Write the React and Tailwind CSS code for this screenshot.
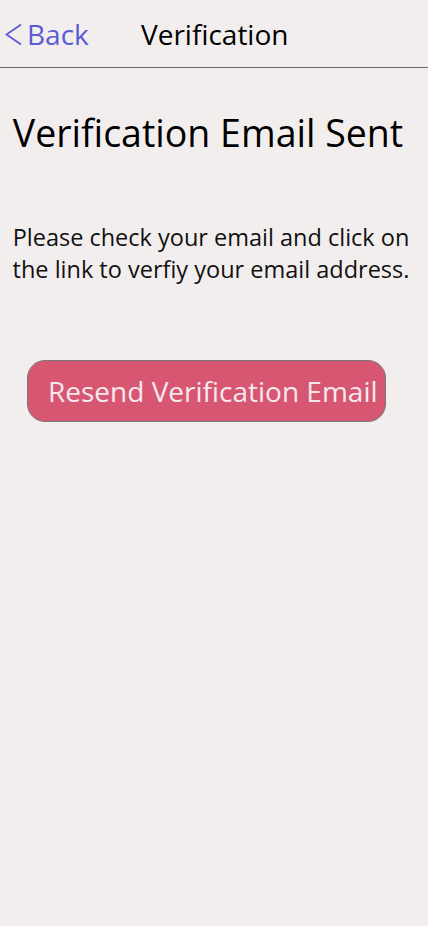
export default function App() {
  return (
    <div className="min-h-[926px] bg-[#f3eeee] font-['Open_Sans',sans-serif]">
      {/* Header */}
      <div className="h-[68px] border-b border-[#6b6b6b] flex items-center">
        <button className="flex items-center pl-[5px] text-[#5a5ad6] text-[28px] leading-none w-[141px]">
          <svg width="17" height="23" viewBox="0 0 17 23" className="mr-[5px] mt-[1px]">
            <polyline points="16,1.5 1.5,11.5 16,21.5" fill="none" stroke="currentColor" strokeWidth="1.8" />
          </svg>
          <span>Back</span>
        </button>
        <h1 className="text-[28px] text-black">Verification</h1>
      </div>

      {/* Body */}
      <div className="flex flex-col items-center">
        <h2 className="mt-[42px] text-[37.5px] text-black leading-tight -translate-x-[6px]">Verification Email Sent</h2>
        <p className="mt-[64px] w-[410px] text-[23.5px] text-[#111] text-center leading-[32px] -translate-x-[3px]">
          Please check your email and click on the link to verfiy your email address.
        </p>
        <button className="mt-[75px] self-start ml-[27px] w-[359px] h-[62px] rounded-[18px] border border-[#777] bg-[#d75773] text-[#f5e8ec] text-[28px] text-left pl-[20px] overflow-hidden whitespace-nowrap">
          Resend Verification Email
        </button>
      </div>
    </div>
  )
}
